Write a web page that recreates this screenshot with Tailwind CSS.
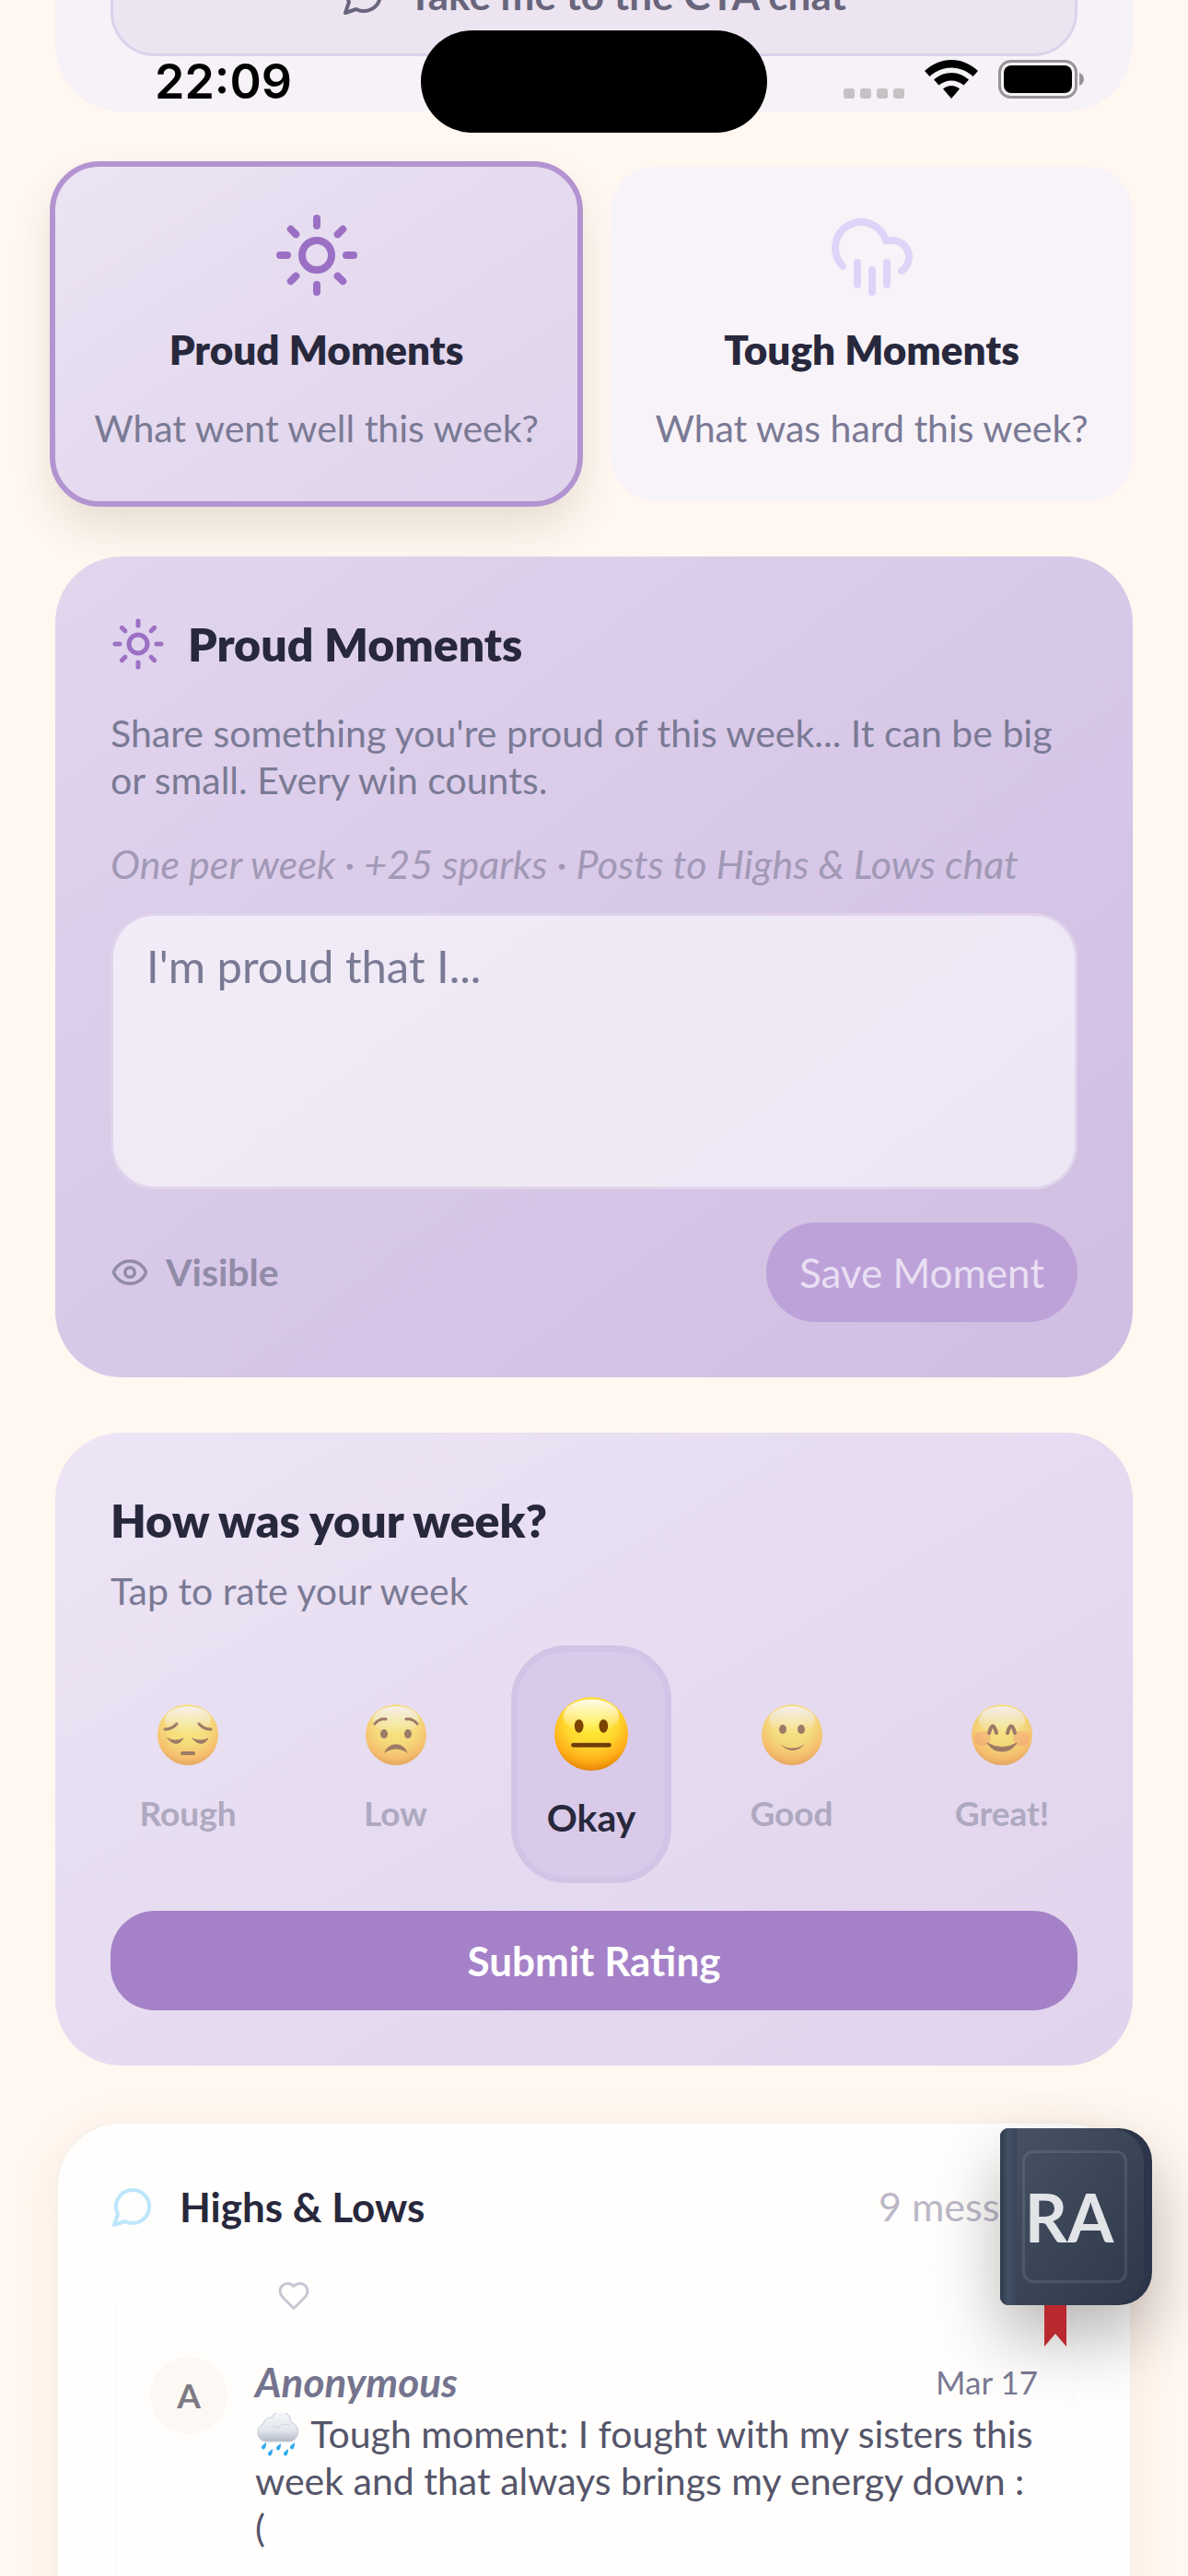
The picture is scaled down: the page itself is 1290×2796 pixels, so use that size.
<!DOCTYPE html>
<html lang="en">
<head>
  <meta charset="UTF-8" />
  <meta name="viewport" content="width=device-width, initial-scale=1.0" />
  <title>Weekly Check-in</title>
  <script src="https://cdn.jsdelivr.net/npm/@tailwindcss/browser@4"></script>
</head>
<body class="relative h-screen overflow-hidden bg-[#fff7f0] font-['Lato',sans-serif] text-[#28283d]">

  <!-- shared symbols -->
  <svg class="absolute size-0" aria-hidden="true">
    <defs>
      <radialGradient id="face" cx="50%" cy="30%" r="72%">
        <stop offset="0" stop-color="#fff23a" />
        <stop offset="0.5" stop-color="#ffd92e" />
        <stop offset="0.8" stop-color="#ffad18" />
        <stop offset="1" stop-color="#e07e00" />
      </radialGradient>
      <linearGradient id="shine" x1="0" y1="0" x2="0" y2="1">
        <stop offset="0" stop-color="#fff" stop-opacity="0.9" />
        <stop offset="1" stop-color="#fff" stop-opacity="0" />
      </linearGradient>
      <linearGradient id="cloud" x1="0" y1="0" x2="0" y2="1">
        <stop offset="0" stop-color="#f4f6f9" />
        <stop offset="0.6" stop-color="#e4e8ee" />
        <stop offset="1" stop-color="#b4bac8" />
      </linearGradient>
      <symbol id="sun" viewBox="0 0 24 24">
        <g fill="none" stroke="currentColor" stroke-width="2" stroke-linecap="round">
          <circle cx="12" cy="12" r="4" />
          <path d="M12 2v2M12 20v2M4.93 4.93l1.41 1.41M17.66 17.66l1.41 1.41M2 12h2M20 12h2M6.34 17.66l-1.41 1.41M19.07 4.93l-1.41 1.41" />
        </g>
      </symbol>
      <symbol id="chat" viewBox="0 0 24 24">
        <path d="M7.9 20A9 9 0 1 0 4 16.1L2 22Z" fill="none" stroke="currentColor" stroke-width="2" stroke-linecap="round" stroke-linejoin="round" />
      </symbol>
      <symbol id="base-face" viewBox="0 0 66 66">
        <circle cx="33" cy="33" r="33" fill="url(#face)" stroke="none" />
        <ellipse cx="33" cy="17" rx="25" ry="15" fill="url(#shine)" stroke="none" />
      </symbol>
    </defs>
  </svg>

  <!-- status bar -->
  <header class="absolute inset-x-0 top-0 z-20 flex h-[177px] items-start justify-between pl-[168px] pr-28">
    <time class="w-[206px] pt-[58px] font-['Inter',sans-serif] text-[52px] leading-[62px] font-semibold text-black">22:09</time>
    <div class="mt-[33px] h-[111px] w-[376px] rounded-full bg-black"></div>
    <div class="flex items-end gap-[22px] pt-[65px]">
      <div class="flex gap-[6px]">
        <span class="h-[11px] w-3 rounded-[3px] bg-[#c5c1c4]"></span>
        <span class="h-[11px] w-3 rounded-[3px] bg-[#c5c1c4]"></span>
        <span class="h-[11px] w-3 rounded-[3px] bg-[#c5c1c4]"></span>
        <span class="h-[11px] w-3 rounded-[3px] bg-[#c5c1c4]"></span>
      </div>
      <svg class="h-[42px] w-[58px]" viewBox="0 0 58 42">
        <path d="M29 0C40 0 50 4.500 58 12l-5.500 6C46 12 38 8.500 29 8.500S12 12 5.500 18L0 12C8 4.500 18 0 29 0Z" />
        <path d="M29 14c7.500 0 14 3 19 7.500L42.500 27.500C39 24.500 34 22.500 29 22.500s-10 2-13.500 5L10 21.500C15 17 21.500 14 29 14Z" />
        <path d="M29 28c3.500 0 6.500 1.300 9 3.500L29 42l-9-10.500c2.500-2.200 5.500-3.500 9-3.500Z" />
      </svg>
      <svg class="h-[42px] w-[94px]" viewBox="0 0 94 42">
        <rect x="1.500" y="1.500" width="83" height="39" rx="12" fill="none" stroke="#979497" stroke-width="3" />
        <rect x="6" y="6" width="74" height="30" rx="8" />
        <path d="M88 14c3 1 5 4 5 7s-2 6-5 7Z" fill="#979497" />
      </svg>
    </div>
  </header>

  <main class="flex flex-col gap-[60px] px-[60px]">
    <!-- chat call to action, scrolled mostly out of view -->
    <section class="-mt-[134px] rounded-[72px] bg-[#f6f2f7] p-[60px]">
      <button type="button" class="flex h-[135px] w-full items-center justify-center gap-6 rounded-[48px] border-3 border-[#dcd2ec] bg-[#ece4f0] text-[44px] font-bold text-[#68657c]">
        <svg class="size-12"><use href="#chat" /></svg>
        Take me to the CTA chat
      </button>
    </section>

    <nav class="grid grid-cols-2 gap-9">
      <button type="button" class="flex flex-col items-center rounded-[48px] bg-linear-to-br from-[#ece4f4] via-[#e5daef] to-[#e0d3ec] pt-12 pb-[54px] shadow-[0_24px_48px_rgba(90,80,50,0.16)] outline-6 outline-[#b394d1]">
        <svg class="size-24 text-[#9b70c4]"><use href="#sun" /></svg>
        <span class="mt-6 text-[44px] leading-[60px] font-extrabold">Proud Moments</span>
        <span class="mt-[30px] text-[41px] leading-[51px] text-[#7a7a95]">What went well this week?</span>
      </button>
      <button type="button" class="flex flex-col items-center rounded-[48px] bg-[#f8f3f8] pt-12 pb-[54px]">
        <svg class="size-24 text-[#ded4f7]" viewBox="0 0 24 24" fill="none" stroke="currentColor" stroke-width="2" stroke-linecap="round" stroke-linejoin="round">
          <path d="M4 14.899A7 7 0 1 1 15.710 8h1.790a4.500 4.500 0 0 1 2.500 8.242M16 14v6M8 14v6M12 16v6" />
        </svg>
        <span class="mt-6 text-[44px] leading-[60px] font-extrabold">Tough Moments</span>
        <span class="mt-[30px] text-[41px] leading-[51px] text-[#7a7a95]">What was hard this week?</span>
      </button>
    </nav>

    <section class="rounded-[72px] bg-linear-to-br from-[#e2d6ee] via-[#d8c8e8] to-[#d0bee2] p-[60px]">
      <h2 class="flex items-center gap-6 text-[50px] leading-[70px] font-extrabold">
        <svg class="size-[60px] text-[#9b70c4]"><use href="#sun" /></svg>
        Proud Moments
      </h2>
      <p class="mt-9 text-[41px] leading-[51px] text-[#7a7a95]">Share something you're proud of this week... It can be big or small. Every win counts.</p>
      <p class="mt-10 text-[43px] leading-[51px] text-[#a199b6] italic">One per week · +25 sparks · Posts to Highs &amp; Lows chat</p>
      <textarea aria-label="Proud moment" placeholder="I'm proud that I..." class="mt-7 block h-[300px] w-full resize-none rounded-[48px] border-3 border-[#e0d4ec] bg-white/60 px-9 py-[21px] text-[49px] leading-[66px] placeholder:text-[#7a7a95]"></textarea>
      <div class="mt-9 flex items-center justify-between">
        <button type="button" class="flex items-center gap-[18px] text-[41px] font-bold text-[#918ba8]">
          <svg class="size-[42px]" viewBox="0 0 24 24" fill="none" stroke="currentColor" stroke-width="2" stroke-linecap="round" stroke-linejoin="round">
            <path d="M2.060 12.350a1 1 0 0 1 0-.7 10.750 10.750 0 0 1 19.880 0 1 1 0 0 1 0 .7 10.750 10.750 0 0 1-19.880 0" />
            <circle cx="12" cy="12" r="3" />
          </svg>
          Visible
        </button>
        <button type="button" class="h-27 rounded-full bg-[#bda2d9] px-9 text-[44px] text-[#e9dff3]">Save Moment</button>
      </div>
    </section>

    <section class="rounded-[72px] bg-linear-to-br from-[#ede5f5] via-[#e6dbf0] to-[#e1d3ec] p-[60px]">
      <h2 class="text-[50px] leading-[70px] font-extrabold">How was your week?</h2>
      <p class="mt-4 text-[41px] leading-[51px] text-[#7a7a95]">Tap to rate your week</p>
      <fieldset class="mt-[34px] flex items-center justify-between">
        <legend class="sr-only">Week rating</legend>
        <label class="flex w-[168px] flex-col items-center gap-7 pt-3 text-[37px] leading-[48px] font-bold text-[#aea9c0]">
          <input type="radio" name="week" value="rough" class="sr-only" />
          <svg class="size-[66px] opacity-60" viewBox="0 0 66 66" fill="none" stroke="#6d3b0c" stroke-width="3" stroke-linecap="round">
            <use href="#base-face" />
            <path d="M8 27q8 0 13-6M58 27q-8 0-13-6" />
            <path d="M11 37q8 4 17 0q-7 11-17 0ZM38 37q8 4 17 0q-7 11-17 0Z" fill="#6d3b0c" stroke-width="1" />
            <path d="M27 53h12" stroke-width="4" />
          </svg>
          Rough
        </label>
        <label class="flex w-[140px] flex-col items-center gap-7 pt-3 text-[37px] leading-[48px] font-bold text-[#aea9c0]">
          <input type="radio" name="week" value="low" class="sr-only" />
          <svg class="size-[66px] opacity-60" viewBox="0 0 66 66" fill="none" stroke="#6d3b0c" stroke-width="3" stroke-linecap="round">
            <use href="#base-face" />
            <path d="M10 21q5-6 12-5M56 21q-5-6-12-5" />
            <g fill="#6d3b0c" stroke="none">
              <ellipse cx="20" cy="32" rx="4" ry="5" />
              <ellipse cx="46" cy="32" rx="4" ry="5" />
              <path d="M20 53c5-13 21-13 26 0c-8-6-18-6-26 0Z" />
            </g>
          </svg>
          Low
        </label>
        <label class="-mx-4 flex h-[258px] w-[174px] flex-col items-center justify-center gap-6 rounded-[60px] border-7 border-[#d3c3e6] bg-[#d9cae9] pt-3 text-[41px] leading-[54px] font-bold">
          <input type="radio" name="week" value="okay" class="sr-only" checked />
          <svg class="size-20" viewBox="0 0 66 66">
            <use href="#base-face" />
            <ellipse cx="22" cy="26" rx="4" ry="6" fill="#7a4300" />
            <ellipse cx="44" cy="26" rx="4" ry="6" fill="#7a4300" />
            <path d="M17 43h32" stroke="#6d3b0c" stroke-width="4" stroke-linecap="round" />
          </svg>
          Okay
        </label>
        <label class="flex w-[150px] flex-col items-center gap-7 pt-3 text-[37px] leading-[48px] font-bold text-[#aea9c0]">
          <input type="radio" name="week" value="good" class="sr-only" />
          <svg class="size-[66px] opacity-60" viewBox="0 0 66 66" fill="#6d3b0c">
            <use href="#base-face" />
            <ellipse cx="23" cy="27" rx="4" ry="5" />
            <ellipse cx="43" cy="27" rx="4" ry="5" />
            <path d="M20 43q13 9 27 0q-13 14-27 0Z" />
          </svg>
          Good
        </label>
        <label class="flex w-[164px] flex-col items-center gap-7 pt-3 text-[37px] leading-[48px] font-bold text-[#aea9c0]">
          <input type="radio" name="week" value="great" class="sr-only" />
          <svg class="size-[66px] opacity-60" viewBox="0 0 66 66" fill="none" stroke="#6d3b0c" stroke-width="4" stroke-linecap="round">
            <use href="#base-face" />
            <ellipse cx="12" cy="37" rx="9" ry="8" fill="#ff5a2a" fill-opacity="0.35" stroke="none" />
            <ellipse cx="54" cy="37" rx="9" ry="8" fill="#ff5a2a" fill-opacity="0.35" stroke="none" />
            <path d="M19 31q4-15 8 0M39 31q4-15 8 0" />
            <path d="M17 42q16 9 32 0q-6 9-16 9t-16-9Z" fill="#6d3b0c" stroke-width="1" />
          </svg>
          Great!
        </label>
      </fieldset>
      <button type="submit" class="mt-[30px] h-27 w-full rounded-[48px] bg-[#a581c8] text-[44px] font-bold text-white">Submit Rating</button>
    </section>

    <section class="rounded-t-[72px] border-3 border-[#f8f2ea] bg-[#fffefc] px-[57px] pt-[57px] shadow-[0_12px_48px_rgba(230,150,120,0.12)]">
      <div class="flex items-center justify-between">
        <h2 class="flex items-center gap-[27px] text-[44px] leading-[66px] font-bold">
          <svg class="size-12 text-[#bce6fb]"><use href="#chat" /></svg>
          Highs &amp; Lows
        </h2>
        <span class="text-[43px] leading-[66px] text-[#bcb8c8]">9 messages</span>
      </div>
      <div class="mx-1 mt-9 h-[480px] rounded-t-[48px] border-3 border-[#fdfcfb] px-9">
        <button type="button" aria-label="Like" class="ml-[138px] block pt-[7px]">
          <svg class="size-9 text-[#c9c6d2]" viewBox="0 0 24 24" fill="none" stroke="currentColor" stroke-width="2" stroke-linejoin="round">
            <path d="M19 14c1.490-1.460 3-3.210 3-5.500A5.500 5.500 0 0 0 16.500 3c-1.760 0-3 .5-4.500 2-1.500-1.500-2.740-2-4.500-2A5.500 5.500 0 0 0 2 8.500c0 2.300 1.500 4.050 3 5.500l7 7Z" />
          </svg>
        </button>
        <article class="mt-12 flex gap-[30px]">
          <div class="flex size-21 shrink-0 items-center justify-center rounded-full bg-[#fcf9f4] text-[37px] font-bold text-[#7e7a84]">A</div>
          <div class="flex-1">
            <div class="flex items-center justify-between">
              <span class="text-[44px] leading-[54px] font-bold text-[#74748f] italic">Anonymous</span>
              <time class="text-[35px] leading-[54px] text-[#7a7a95]">Mar 17</time>
            </div>
            <p class="mt-1 text-[41px] leading-[51px] text-[#55556a]">
              <svg class="inline-block h-12 w-[51px] align-[-10px]" viewBox="0 0 51 48" role="img" aria-label="Rain cloud">
                <path d="M11 31a10 10 0 0 1-2-19A8 8 0 0 1 18 5a11 11 0 0 1 21 5a11 11 0 0 1 0 21Z" fill="url(#cloud)" stroke="#c5cad6" />
                <path d="M17 16q5-3 9 1M23 18q6-8 14-5" fill="none" stroke="#cfd4de" stroke-width="1" />
                <path d="M12 32q-6 4-5 6q2 3 4 0q1-2 1-6ZM28 33q-6 4-5 6q2 3 4 0q1-2 1-6ZM43 32q-6 4-5 6q2 3 4 0q1-2 1-6ZM19 39q-6 4-5 6q2 3 4 0q1-2 1-6ZM36 39q-6 4-5 6q2 3 4 0q1-2 1-6Z" fill="#2fa9ef" />
              </svg>
              Tough moment: I fought with my sisters this week and that always brings my energy down :<br />(
            </p>
          </div>
        </article>
      </div>
    </section>
  </main>

  <!-- floating journal -->
  <button type="button" aria-label="Open journal" class="absolute top-[2310px] right-[39px] z-10 h-48 w-[165px] rounded-l-[9px] rounded-r-[36px] bg-[#2c3549] shadow-[0_36px_72px_rgba(0,0,0,0.28)]">
    <span class="flex h-full w-[156px] overflow-hidden rounded-l-[9px] rounded-r-[36px] bg-linear-to-br from-[#485366] to-[#2d3848]">
      <span class="w-[18px] bg-linear-to-r from-[#2e3a4c] via-[#445064] to-[#37445a]"></span>
      <span class="my-6 ml-[6px] flex w-[114px] items-center justify-center rounded-xl border-3 border-white/10 pr-3 text-[72px] font-bold text-[#e2e4e8]">RA</span>
    </span>
    <svg class="absolute top-full left-12 h-[45px] w-6" viewBox="0 0 24 45">
      <path d="M0 0h24v45L12 31 0 45Z" fill="#b9292e" />
    </svg>
  </button>
</body>
</html>
